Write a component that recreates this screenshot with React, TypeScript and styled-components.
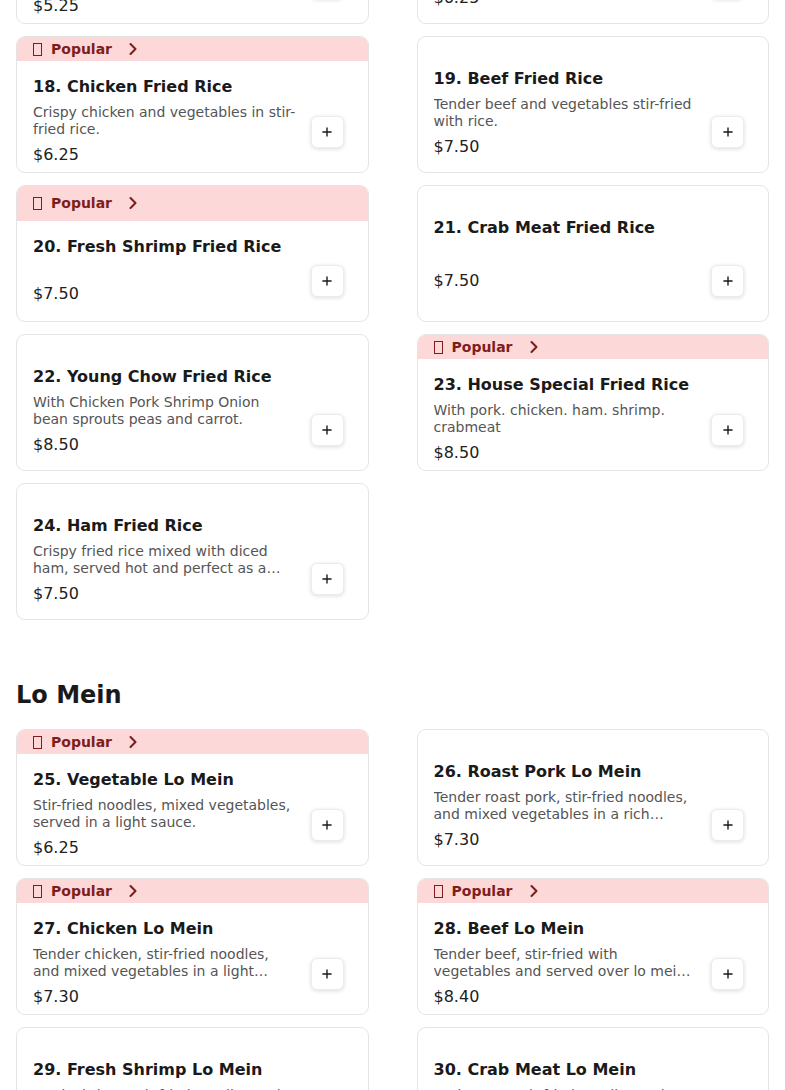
import styled, { createGlobalStyle } from "styled-components"
import { ChevronRight, Plus } from "lucide-react"


type MenuItem = {
    id: number
    name: string
    desc?: string
    price: string
    popular?: boolean
}

type MenuSection = {
    title: string
    items: MenuItem[]
}

const sections: MenuSection[] = [
    {
        title: 'Fried Rice',
        items: [
            { id: 16, name: 'Roast Pork Fried Rice', desc: 'Roast pork and vegetables stir-fried with rice.', price: '5.25', popular: true },
            { id: 17, name: 'Shrimp Fried Rice', desc: 'Shrimp and vegetables stir-fried with rice.', price: '6.25' },
            { id: 18, name: 'Chicken Fried Rice', desc: 'Crispy chicken and vegetables in stir-fried rice.', price: '6.25', popular: true },
            { id: 19, name: 'Beef Fried Rice', desc: 'Tender beef and vegetables stir-fried with rice.', price: '7.50' },
            { id: 20, name: 'Fresh Shrimp Fried Rice', price: '7.50', popular: true },
            { id: 21, name: 'Crab Meat Fried Rice', price: '7.50' },
            { id: 22, name: 'Young Chow Fried Rice', desc: 'With Chicken Pork Shrimp Onion bean sprouts peas and carrot.', price: '8.50' },
            { id: 23, name: 'House Special Fried Rice', desc: 'With pork. chicken. ham. shrimp. crabmeat', price: '8.50', popular: true },
            { id: 24, name: 'Ham Fried Rice', desc: 'Crispy fried rice mixed with diced ham, served hot and perfect as a side or main dish.', price: '7.50' },
        ],
    },
    {
        title: 'Lo Mein',
        items: [
            { id: 25, name: 'Vegetable Lo Mein', desc: 'Stir-fried noodles, mixed vegetables, served in a light sauce.', price: '6.25', popular: true },
            { id: 26, name: 'Roast Pork Lo Mein', desc: 'Tender roast pork, stir-fried noodles, and mixed vegetables in a rich savory sauce.', price: '7.30' },
            { id: 27, name: 'Chicken Lo Mein', desc: 'Tender chicken, stir-fried noodles, and mixed vegetables in a light savory sauce.', price: '7.30', popular: true },
            { id: 28, name: 'Beef Lo Mein', desc: 'Tender beef, stir-fried with vegetables and served over lo mein noodles.', price: '8.40', popular: true },
            { id: 29, name: 'Fresh Shrimp Lo Mein', desc: 'Fresh shrimp, stir-fried noodles and mixed vegetables.', price: '8.40' },
            { id: 30, name: 'Crab Meat Lo Mein', desc: 'Crab meat, stir-fried noodles and mixed vegetables.', price: '8.40' },
        ],
    },
]


export default function App() {
    return (
        <>
            <GlobalStyle />
            <StyledPage>
                {sections.map(section => (
                    <StyledSection key={section.title}>
                        <h2>{section.title}</h2>
                        <CardGrid>
                            {section.items.map(item => <ItemCard key={item.id} item={item} />)}
                        </CardGrid>
                    </StyledSection>
                ))}
            </StyledPage>
        </>
    )
}


function ItemCard({ item }: { item: MenuItem }) {
    const popular = !!item.popular
    // cards without a description spread title and price further apart
    const priceGap = item.desc ? 5 : popular ? 22 : 28

    return (
        <Card>
            {popular && (
                <PopularBanner>
                    <MissingGlyph />
                    Popular
                    <ChevronRight size={20} strokeWidth={2.5} />
                </PopularBanner>
            )}
            <CardBody $popular={popular}>
                <Info>
                    <h3>{item.id}. {item.name}</h3>
                    {item.desc && <p>{item.desc}</p>}
                    <Price $gap={priceGap}>${item.price}</Price>
                </Info>
                <AddButton title="Add to cart"><Plus size={14} strokeWidth={2.4} /></AddButton>
            </CardBody>
        </Card>
    )
}


const GlobalStyle = createGlobalStyle`
    body {
        margin: 0;
        background: #fff;
        font-family: "DejaVu Sans", "Noto Sans", sans-serif;
        color: #1a1a1a;
    }
`

// the reference is scrolled part way down the menu
const StyledPage = styled.main`
    padding: 0 16px;
    margin-top: -164px;
`

const StyledSection = styled.section`
    & + & {
        margin-top: 58px;
    }

    h2 {
        margin: 0 0 17px;
        font-size: 24px;
        line-height: 34px;
        font-weight: 700;
        color: #1a1a1a;
    }
`

const CardGrid = styled.div`
    display: grid;
    grid-template-columns: 1fr 1fr;
    grid-auto-rows: 1fr;
    column-gap: 48px;
    row-gap: 12px;
`

const Card = styled.article`
    display: grid;
    grid-template-columns: minmax(0, 1fr);
    border: 1px solid #e4e4e4;
    border-radius: 9px;
    overflow: hidden;
    background: #fff;
`

const PopularBanner = styled.div`
    display: flex;
    align-items: center;
    min-height: 24px;
    padding: 0 16px;
    background: #fdd8d8;
    color: #7f1d1d;
    font-size: 14px;
    font-weight: 700;

    svg {
        margin-left: 11px;
    }
`

const MissingGlyph = styled.span`
    box-sizing: border-box;
    width: 9px;
    height: 13px;
    margin-right: 9px;
    border: 1.2px solid currentColor;
`

const CardBody = styled.div<{ $popular: boolean }>`
    display: grid;
    grid-template-columns: minmax(0, 1fr) auto;
    column-gap: 13px;
    padding: ${({ $popular }) => $popular ? '13px' : '29px'} 16px 5px;
`

const Info = styled.div`
    display: flex;
    flex-direction: column;
    align-self: start;
    min-width: 0;

    h3 {
        margin: 0;
        font-size: 16px;
        line-height: 26px;
        font-weight: 700;
        color: #1a1a1a;
    }

    p {
        margin: 4px 0 0;
        font-size: 14px;
        line-height: 17px;
        color: #555;
        display: -webkit-box;
        -webkit-line-clamp: 2;
        -webkit-box-orient: vertical;
        overflow: hidden;
    }
`

const Price = styled.span<{ $gap: number }>`
    margin-top: ${({ $gap }) => $gap}px;
    font-size: 16px;
    line-height: 24px;
    color: #222;
`

const AddButton = styled.button`
    align-self: end;
    display: flex;
    align-items: center;
    justify-content: center;
    width: 33px;
    height: 32px;
    margin: 0 8px 19px 0;
    padding: 0;
    border: 1px solid #ececec;
    border-radius: 6px;
    background: #fff;
    color: #1a1a1a;
    box-shadow: 0 1px 4px rgba(0, 0, 0, 0.14);
    cursor: pointer;
`
